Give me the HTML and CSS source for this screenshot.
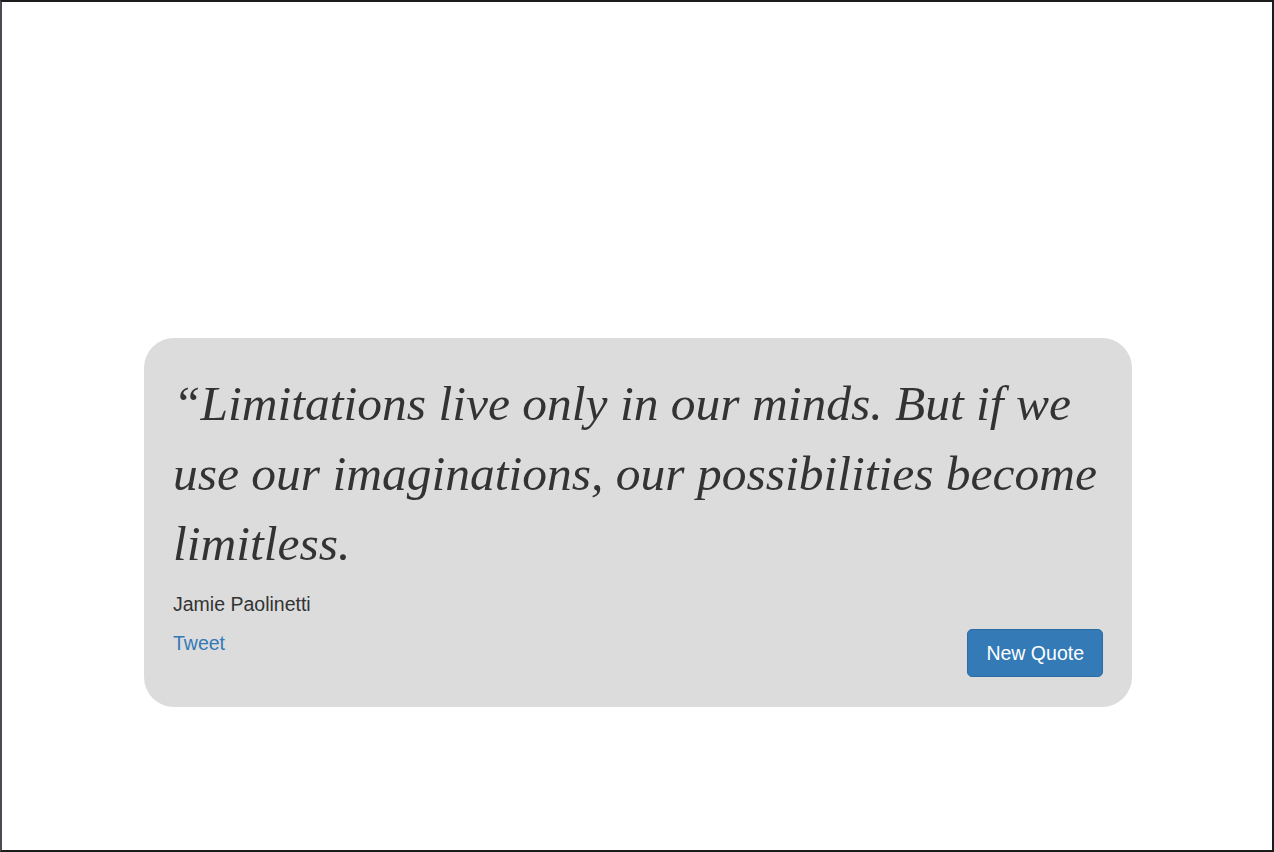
FILE: index.html
```html
<!DOCTYPE html>
<html>
<head>
<meta charset="utf-8">
<link rel="stylesheet" href="styles.css">
</head>
<body>
<div class="frame">
  <div class="card">
    <p class="quote">“Limitations live only in our minds. But if we use our imaginations, our possibilities become limitless.</p>
    <p class="author">Jamie Paolinetti</p>
    <div class="actions">
      <a class="tweet" href="#">Tweet</a>
      <button class="btn">New Quote</button>
    </div>
  </div>
</div>
</body>
</html>
```

FILE: styles.css
```css
html, body {
  margin: 0;
  padding: 0;
  height: 100%;
  background: #fff;
}
.frame {
  box-sizing: border-box;
  height: 852px;
  border: 2px solid #1c1c1c;
  border-left-color: #4a4a52;
  padding-top: 336px;
  padding-left: 2px;
  display: flex;
  justify-content: center;
  align-items: flex-start;
  font-family: "Liberation Sans", Arial, sans-serif;
  color: #333;
}
.card {
  width: 988px;
  box-sizing: border-box;
  background: #dcdcdc;
  border-radius: 30px;
  padding: 31px 29px 30px 29px;
}
.quote {
  margin: 0;
  font-family: "Liberation Serif", "Times New Roman", serif;
  font-style: italic;
  font-size: 49.5px;
  line-height: 70px;
  color: #333;
}
.author {
  margin: 11px 0 0;
  font-size: 19.5px;
  line-height: 28px;
}
.actions {
  display: flex;
  justify-content: space-between;
  align-items: flex-start;
  margin-top: 11px;
}
.tweet {
  color: #337ab7;
  text-decoration: none;
  font-size: 19.5px;
  line-height: 28px;
}
.btn {
  font-family: "Liberation Sans", Arial, sans-serif;
  font-size: 19.5px;
  line-height: 26px;
  padding: 10px 18px;
  color: #fff;
  background: #337ab7;
  border: 1px solid #2e6da4;
  border-radius: 5px;
  margin-top: 0;
}
```
